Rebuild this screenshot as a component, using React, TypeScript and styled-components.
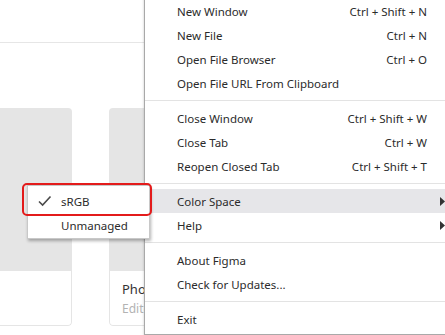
import React, { FC } from "react";
import styled, { createGlobalStyle } from "styled-components";

const GlobalStyle = createGlobalStyle`
  html, body {
    margin: 0;
    padding: 0;
    background: #fff;
    overflow: hidden;
  }
  body {
    font-family: "Segoe UI", "Noto Sans", "Open Sans", sans-serif;
  }
`;

const Page = styled.div`
  position: relative;
  width: 445px;
  height: 335px;
  overflow: hidden;
  background: #fff;
`;

const Header = styled.div`
  height: 42px;
  border-bottom: 1px solid #e6e6e6;
`;

const CardRow = styled.div`
  display: flex;
  gap: 37px;
  margin-left: -109px;
  padding-top: 65px;
`;

const Card = styled.div`
  flex: 0 0 181px;
  display: flex;
  flex-direction: column;
  border-radius: 4px;
  overflow: hidden;
  .thumb {
    height: 163px;
    background: #e5e5e5;
  }
  .info {
    height: 55px;
    box-sizing: border-box;
    padding: 9px 12px 0;
    border: 1px solid #e5e5e5;
    border-top: none;
    border-radius: 0 0 4px 4px;
  }
  .name {
    font-size: 13px;
    line-height: 18px;
    color: #333;
    white-space: nowrap;
  }
  .meta {
    margin-top: 3px;
    font-size: 12px;
    line-height: 16px;
    color: #b3b3b3;
    white-space: nowrap;
  }
`;

const Menu = styled.div`
  position: absolute;
  left: 144px;
  top: -6px;
  width: 310px;
  padding: 4px 0 3px;
  background: #fff;
  border: 1px solid #a9a9a9;
  box-shadow: 1px 2px 3px rgba(0, 0, 0, 0.45);
  color: #2b2b2b;
  font-size: 11.5px;
`;

const Row = styled.div<{ active?: boolean }>`
  display: grid;
  grid-template-columns: 1fr auto 28px;
  align-items: center;
  height: 24px;
  padding-left: 32px;
  background: ${(p) => (p.active ? "#e6e6e9" : "transparent")};
  white-space: nowrap;
  .arrow {
    display: flex;
    padding-left: 13px;
  }
`;

const Separator = styled.div`
  height: 11px;
  display: flex;
  align-items: center;
  &::after {
    content: "";
    flex: 1;
    height: 1px;
    background: #e3e3e3;
  }
`;

const SubMenu = styled.div`
  position: absolute;
  left: 27px;
  top: 185px;
  width: 121px;
  padding: 3px 0 1px;
  background: #fff;
  border: 1px solid #c8c8c8;
  box-shadow: 1px 2px 3px rgba(0, 0, 0, 0.3);
  color: #2b2b2b;
  font-size: 11.5px;
`;

const SubRow = styled.div`
  display: grid;
  grid-template-columns: 33px 1fr;
  align-items: center;
  height: 24px;
  .check {
    display: flex;
    padding-left: 10px;
  }
`;

const Callout = styled.div`
  position: absolute;
  left: 22px;
  top: 183px;
  width: 130px;
  height: 33px;
  box-sizing: border-box;
  border: 2px solid #e31b1b;
  border-radius: 5px;
`;

type Item = { label: string; keys?: string; sub?: boolean; active?: boolean } | "sep";

const items: Item[] = [
  { label: "New Window", keys: "Ctrl + Shift + N" },
  { label: "New File", keys: "Ctrl + N" },
  { label: "Open File Browser", keys: "Ctrl + O" },
  { label: "Open File URL From Clipboard" },
  "sep",
  { label: "Close Window", keys: "Ctrl + Shift + W" },
  { label: "Close Tab", keys: "Ctrl + W" },
  { label: "Reopen Closed Tab", keys: "Ctrl + Shift + T" },
  "sep",
  { label: "Color Space", sub: true, active: true },
  { label: "Help", sub: true },
  "sep",
  { label: "About Figma" },
  { label: "Check for Updates..." },
  "sep",
  { label: "Exit" },
];

const Arrow: FC = () => (
  <svg width="5" height="9" viewBox="0 0 5 9">
    <path d="M0 0 L5 4.5 L0 9 Z" fill="#333" />
  </svg>
);

const Check: FC = () => (
  <svg width="14" height="12" viewBox="0 0 14 12">
    <path d="M1 6.5 L4.6 10 L12.5 1.5" fill="none" stroke="#4a4a4a" strokeWidth="1.6" />
  </svg>
);

const App: FC = () => {
  return (
    <Page>
      <GlobalStyle />
      <Header />
      <CardRow>
        <Card>
          <div className="thumb" />
          <div className="info" />
        </Card>
        <Card>
          <div className="thumb" />
          <div className="info">
            <div className="name">Pho</div>
            <div className="meta">Edite</div>
          </div>
        </Card>
      </CardRow>

      <Menu>
        {items.map((item, i) =>
          item === "sep" ? (
            <Separator key={i} />
          ) : (
            <Row key={i} active={item.active}>
              <span>{item.label}</span>
              <span>{item.keys}</span>
              <span className="arrow">{item.sub && <Arrow />}</span>
            </Row>
          )
        )}
      </Menu>

      <SubMenu>
        <SubRow>
          <span className="check">
            <Check />
          </span>
          <span>sRGB</span>
        </SubRow>
        <SubRow>
          <span />
          <span>Unmanaged</span>
        </SubRow>
      </SubMenu>
      <Callout />
    </Page>
  );
};

export default App;
